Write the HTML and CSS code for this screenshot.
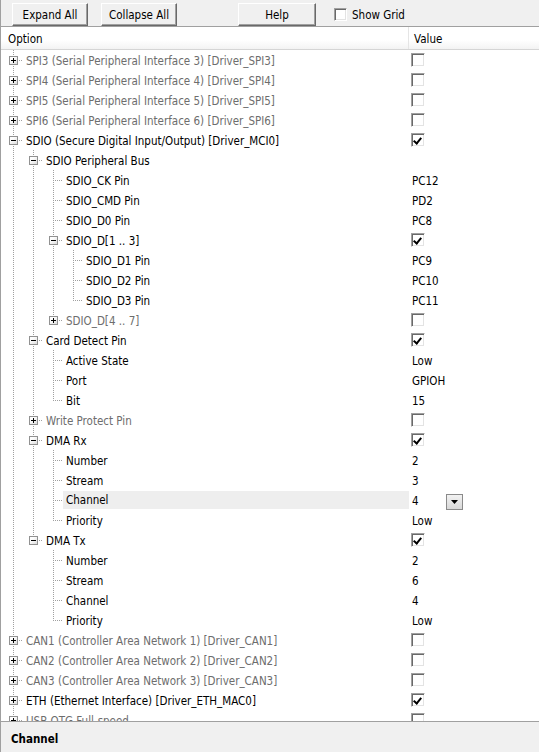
FILE: index.html
```html
<!DOCTYPE html>
<html>
<head>
<meta charset="utf-8">
<link rel="stylesheet" href="styles.css">
</head>
<body>
<div class="app">
  <div class="toolbar">
    <button class="btn btn-expand">Expand All</button>
    <button class="btn btn-collapse">Collapse All</button>
    <button class="btn btn-help">Help</button>
    <label class="grid-toggle"><span class="tcb"></span>Show Grid</label>
  </div>
  <div class="table">
    <div class="head">
      <div class="h-opt">Option</div>
      <div class="h-val">Value</div>
    </div>
    <div class="body">
      <div class="row"><div class="tree"><span class="c mid"><i class="box plus"></i></span><span class="lbl dis">SPI3 (Serial Peripheral Interface 3) [Driver_SPI3]</span></div><div class="val"><span class="chk"></span></div></div>
      <div class="row"><div class="tree"><span class="c mid"><i class="box plus"></i></span><span class="lbl dis">SPI4 (Serial Peripheral Interface 4) [Driver_SPI4]</span></div><div class="val"><span class="chk"></span></div></div>
      <div class="row"><div class="tree"><span class="c mid"><i class="box plus"></i></span><span class="lbl dis">SPI5 (Serial Peripheral Interface 5) [Driver_SPI5]</span></div><div class="val"><span class="chk"></span></div></div>
      <div class="row"><div class="tree"><span class="c mid"><i class="box plus"></i></span><span class="lbl dis">SPI6 (Serial Peripheral Interface 6) [Driver_SPI6]</span></div><div class="val"><span class="chk"></span></div></div>
      <div class="row"><div class="tree"><span class="c mid"><i class="box minus"></i></span><span class="lbl">SDIO (Secure Digital Input/Output) [Driver_MCI0]</span></div><div class="val"><span class="chk on"></span></div></div>
      <div class="row"><div class="tree"><span class="g v"></span><span class="c mid"><i class="box minus"></i></span><span class="lbl">SDIO Peripheral Bus</span></div><div class="val"></div></div>
      <div class="row"><div class="tree"><span class="g v"></span><span class="g v"></span><span class="c mid"></span><span class="lbl">SDIO_CK Pin</span></div><div class="val"><span class="vt">PC12</span></div></div>
      <div class="row"><div class="tree"><span class="g v"></span><span class="g v"></span><span class="c mid"></span><span class="lbl">SDIO_CMD Pin</span></div><div class="val"><span class="vt">PD2</span></div></div>
      <div class="row"><div class="tree"><span class="g v"></span><span class="g v"></span><span class="c mid"></span><span class="lbl">SDIO_D0 Pin</span></div><div class="val"><span class="vt">PC8</span></div></div>
      <div class="row"><div class="tree"><span class="g v"></span><span class="g v"></span><span class="c mid"><i class="box minus"></i></span><span class="lbl">SDIO_D[1 .. 3]</span></div><div class="val"><span class="chk on"></span></div></div>
      <div class="row"><div class="tree"><span class="g v"></span><span class="g v"></span><span class="g v"></span><span class="c mid"></span><span class="lbl">SDIO_D1 Pin</span></div><div class="val"><span class="vt">PC9</span></div></div>
      <div class="row"><div class="tree"><span class="g v"></span><span class="g v"></span><span class="g v"></span><span class="c mid"></span><span class="lbl">SDIO_D2 Pin</span></div><div class="val"><span class="vt">PC10</span></div></div>
      <div class="row"><div class="tree"><span class="g v"></span><span class="g v"></span><span class="g v"></span><span class="c last"></span><span class="lbl">SDIO_D3 Pin</span></div><div class="val"><span class="vt">PC11</span></div></div>
      <div class="row"><div class="tree"><span class="g v"></span><span class="g v"></span><span class="c last"><i class="box plus"></i></span><span class="lbl dis">SDIO_D[4 .. 7]</span></div><div class="val"><span class="chk"></span></div></div>
      <div class="row"><div class="tree"><span class="g v"></span><span class="c mid"><i class="box minus"></i></span><span class="lbl">Card Detect Pin</span></div><div class="val"><span class="chk on"></span></div></div>
      <div class="row"><div class="tree"><span class="g v"></span><span class="g v"></span><span class="c mid"></span><span class="lbl">Active State</span></div><div class="val"><span class="vt">Low</span></div></div>
      <div class="row"><div class="tree"><span class="g v"></span><span class="g v"></span><span class="c mid"></span><span class="lbl">Port</span></div><div class="val"><span class="vt">GPIOH</span></div></div>
      <div class="row"><div class="tree"><span class="g v"></span><span class="g v"></span><span class="c last"></span><span class="lbl">Bit</span></div><div class="val"><span class="vt">15</span></div></div>
      <div class="row"><div class="tree"><span class="g v"></span><span class="c mid"><i class="box plus"></i></span><span class="lbl dis">Write Protect Pin</span></div><div class="val"><span class="chk"></span></div></div>
      <div class="row"><div class="tree"><span class="g v"></span><span class="c mid"><i class="box minus"></i></span><span class="lbl">DMA Rx</span></div><div class="val"><span class="chk on"></span></div></div>
      <div class="row"><div class="tree"><span class="g v"></span><span class="g v"></span><span class="c mid"></span><span class="lbl">Number</span></div><div class="val"><span class="vt">2</span></div></div>
      <div class="row"><div class="tree"><span class="g v"></span><span class="g v"></span><span class="c mid"></span><span class="lbl">Stream</span></div><div class="val"><span class="vt">3</span></div></div>
      <div class="row"><div class="tree"><span class="g v"></span><span class="g v"></span><span class="c mid"></span><span class="lbl sel">Channel</span></div><div class="val"><span class="vt vtext">4</span><span class="drop"><svg width="7" height="4" viewBox="0 0 7 4"><path d="M0 0h7L3.5 4z" fill="#000"/></svg></span></div></div>
      <div class="row"><div class="tree"><span class="g v"></span><span class="g v"></span><span class="c last"></span><span class="lbl">Priority</span></div><div class="val"><span class="vt">Low</span></div></div>
      <div class="row"><div class="tree"><span class="g v"></span><span class="c last"><i class="box minus"></i></span><span class="lbl">DMA Tx</span></div><div class="val"><span class="chk on"></span></div></div>
      <div class="row"><div class="tree"><span class="g v"></span><span class="g"></span><span class="c mid"></span><span class="lbl">Number</span></div><div class="val"><span class="vt">2</span></div></div>
      <div class="row"><div class="tree"><span class="g v"></span><span class="g"></span><span class="c mid"></span><span class="lbl">Stream</span></div><div class="val"><span class="vt">6</span></div></div>
      <div class="row"><div class="tree"><span class="g v"></span><span class="g"></span><span class="c mid"></span><span class="lbl">Channel</span></div><div class="val"><span class="vt">4</span></div></div>
      <div class="row"><div class="tree"><span class="g v"></span><span class="g"></span><span class="c last"></span><span class="lbl">Priority</span></div><div class="val"><span class="vt">Low</span></div></div>
      <div class="row"><div class="tree"><span class="c mid"><i class="box plus"></i></span><span class="lbl dis">CAN1 (Controller Area Network 1) [Driver_CAN1]</span></div><div class="val"><span class="chk"></span></div></div>
      <div class="row"><div class="tree"><span class="c mid"><i class="box plus"></i></span><span class="lbl dis">CAN2 (Controller Area Network 2) [Driver_CAN2]</span></div><div class="val"><span class="chk"></span></div></div>
      <div class="row"><div class="tree"><span class="c mid"><i class="box plus"></i></span><span class="lbl dis">CAN3 (Controller Area Network 3) [Driver_CAN3]</span></div><div class="val"><span class="chk"></span></div></div>
      <div class="row"><div class="tree"><span class="c mid"><i class="box plus"></i></span><span class="lbl">ETH (Ethernet Interface) [Driver_ETH_MAC0]</span></div><div class="val"><span class="chk on"></span></div></div>
      <div class="row"><div class="tree"><span class="c mid"><i class="box plus"></i></span><span class="lbl dis">USB OTG Full-speed</span></div><div class="val"><span class="chk"></span></div></div>
    </div>
  </div>
  <div class="status">Channel</div>
</div>
</body>
</html>
```
FILE: styles.css
```css
* { box-sizing: border-box; }
html, body { margin: 0; padding: 0; background: #f0f0f0; }
body {
  font-family: "DejaVu Sans Condensed", "Liberation Sans", sans-serif;
  font-size: 11.5px;
  color: #000;
}
.app {
  width: 539px;
  height: 752px;
  display: flex;
  flex-direction: column;
  overflow: hidden;
  border-left: 1px solid #a0a0a0;
}
.toolbar {
  height: 29px;
  display: flex;
  align-items: flex-start;
  padding: 3px 0 0 11px;
  background: #f0f0f0;
}
.btn {
  font: inherit;
  height: 23px;
  padding: 0;
  background: #f0f0f0;
  border: 1px solid;
  border-color: #fff #696969 #696969 #fff;
  box-shadow: inset -1px -1px 0 #a0a0a0;
  color: #000;
}
.btn-expand { width: 76px; }
.btn-collapse { width: 76px; margin-left: 13px; }
.btn-help { width: 78px; margin-left: 61px; }
.grid-toggle {
  display: flex;
  align-items: center;
  height: 23px;
  margin-left: 18px;
}
.tcb {
  width: 13px;
  height: 13px;
  background: #fff;
  border: 1px solid;
  border-color: #a0a0a0 #fff #fff #a0a0a0;
  box-shadow: inset 1px 1px 0 #696969, inset -1px -1px 0 #e3e3e3;
  margin-right: 5px;
}
.table {
  border-top: 1px solid #a0a0a0;
  background: #fff;
  display: flex;
  flex-direction: column;
}
.head {
  height: 23px;
  display: flex;
  background: linear-gradient(#fff, #fff 60%, #f3f3f3);
  border-bottom: 1px solid #d5d5d5;
}
.h-opt {
  width: 408px;
  padding: 3px 0 0 7px;
  line-height: 19px;
  border-right: 1px solid #e5e5e5;
}
.h-val {
  padding: 3px 0 0 5px;
  line-height: 19px;
}
.body {
  height: 671px;
  overflow: hidden;
}
.row {
  height: 20px;
  display: flex;
}
.tree {
  width: 408px;
  display: flex;
  padding-left: 2px;
}
.g, .c {
  width: 20px;
  height: 20px;
  flex: none;
  position: relative;
}
.g.v::before, .c::before {
  content: "";
  position: absolute;
  left: 10px;
  top: 0;
  width: 1px;
  height: 20px;
  background: repeating-linear-gradient(to bottom, #a0a0a0 0 1px, transparent 1px 2px);
}
.c.last::before { height: 11px; }
.c::after {
  content: "";
  position: absolute;
  left: 11px;
  top: 10px;
  width: 9px;
  height: 1px;
  background: repeating-linear-gradient(to right, transparent 0 1px, #a0a0a0 1px 2px);
}
.box {
  position: absolute;
  left: 6px;
  top: 6px;
  width: 9px;
  height: 9px;
  border: 1px solid #919191;
  background: linear-gradient(135deg, #fff 30%, #dcdcdc);
  z-index: 1;
}
.box::before {
  content: "";
  position: absolute;
  left: 1px;
  top: 3px;
  width: 5px;
  height: 1px;
  background: #000;
}
.box.plus::after {
  content: "";
  position: absolute;
  left: 3px;
  top: 1px;
  width: 1px;
  height: 5px;
  background: #000;
}
.lbl {
  flex: 1;
  padding: 2px 0 0 3px;
  line-height: 18px;
  white-space: nowrap;
  overflow: hidden;
}
.lbl.dis { color: #6d6d6d; }
.lbl.sel { background: #eeeeee; margin: 1px 0; padding-top: 1px; line-height: 17px; }
.val {
  flex: 1;
  display: flex;
  align-items: center;
  padding-left: 3px;
}
.vt {
  padding-top: 2px;
  line-height: 18px;
}
.chk {
  width: 14px;
  height: 14px;
  margin-left: -1px;
  background: #fff;
  border: 1px solid;
  border-color: #a0a0a0 #fff #fff #a0a0a0;
  box-shadow: inset 1px 1px 0 #696969, inset -1px -1px 0 #e3e3e3;
  position: relative;
}
.chk.on::after {
  content: "";
  position: absolute;
  left: 3px;
  top: 2px;
  width: 3px;
  height: 6px;
  border: solid #000;
  border-width: 0 2px 2px 0;
  transform: rotate(40deg);
}
.vtext { width: 34px; }
.drop {
  width: 17px;
  height: 16px;
  align-self: flex-end;
  border: 1px solid #8a8a8a;
  background: linear-gradient(#f2f2f2, #d8d8d8);
  display: flex;
  align-items: center;
  justify-content: center;
}
.drop svg { display: block; }
.status {
  flex: 1;
  border-top: 1px solid #a0a0a0;
  background: #f0f0f0;
  font-weight: bold;
  padding: 4px 0 0 10px;
  line-height: 26px;
}
```
